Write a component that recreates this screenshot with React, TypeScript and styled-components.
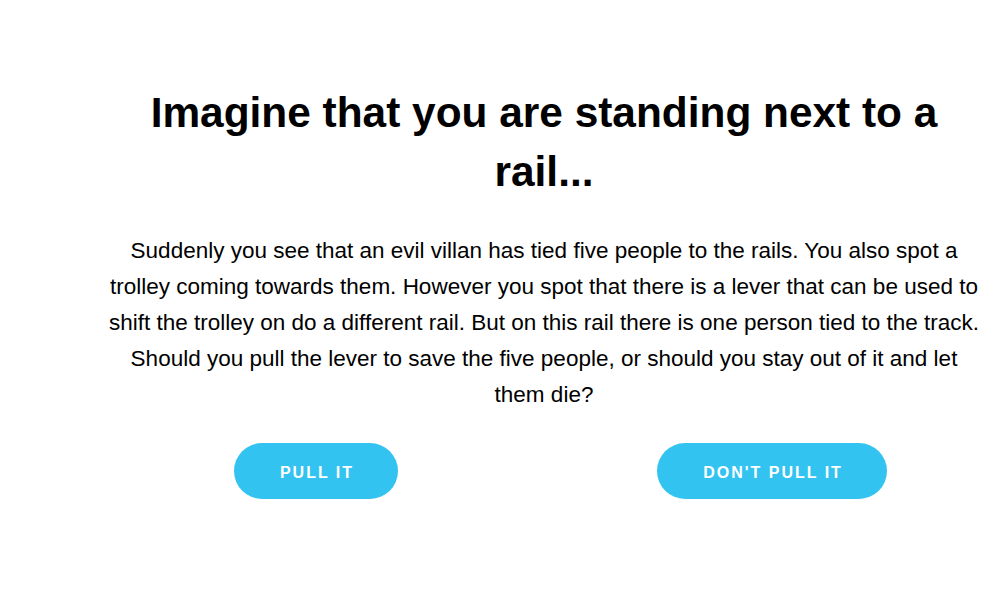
import React from "react";
import styled, { createGlobalStyle } from "styled-components";

const GlobalStyle = createGlobalStyle`
  html, body {
    margin: 0;
    padding: 0;
    background: #ffffff;
  }
  body {
    font-family: "Liberation Sans", Arial, sans-serif;
    color: #000000;
  }
`;

const Page = styled.main`
  box-sizing: border-box;
  width: 995px;
  padding: 84px 15px 0 108px;
`;

const Heading = styled.h1`
  margin: 0;
  font-size: 42.4px;
  line-height: 58.8px;
  font-weight: 700;
  text-align: center;
  color: #000;
`;

const Story = styled.p`
  margin: 31px 0 0;
  font-size: 22.5px;
  line-height: 36px;
  text-align: center;
  color: #000;
`;

const Choices = styled.div`
  display: grid;
  grid-template-columns: 1fr 1fr;
  column-gap: 40px;
  margin-top: 30px;
  justify-items: center;
`;

const ChoiceButton = styled.button`
  box-sizing: border-box;
  height: 56px;
  padding: 4px 44px 0 46px;
  border: none;
  border-radius: 28px;
  background: #33c3f0;
  color: #ffffff;
  font-family: "Liberation Sans", Arial, sans-serif;
  font-size: 16px;
  font-weight: 700;
  letter-spacing: 2px;
  text-transform: uppercase;
  cursor: pointer;
`;

export default function App() {
  return (
    <>
      <GlobalStyle />
      <Page>
        <Heading>Imagine that you are standing next to a rail...</Heading>
        <Story>
          Suddenly you see that an evil villan has tied five people to the rails. You also spot a
          trolley coming towards them. However you spot that there is a lever that can be used to
          shift the trolley on do a different rail. But on this rail there is one person tied to the
          track. Should you pull the lever to save the five people, or should you stay out of it and
          let them die?
        </Story>
        <Choices>
          <ChoiceButton>Pull it</ChoiceButton>
          <ChoiceButton>Don't pull it</ChoiceButton>
        </Choices>
      </Page>
    </>
  );
}
